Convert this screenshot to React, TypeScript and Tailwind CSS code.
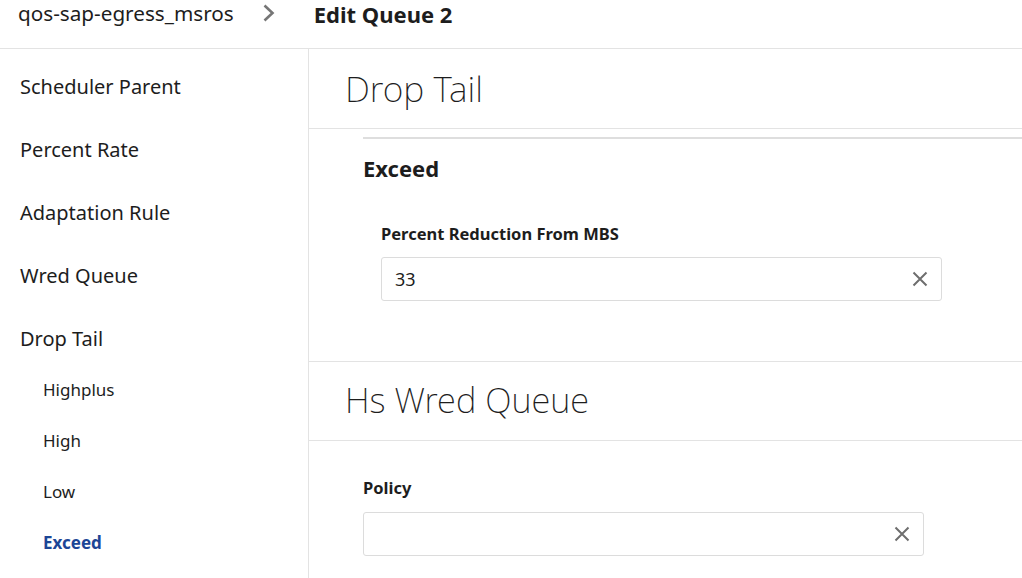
const navItems = ["Scheduler Parent", "Percent Rate", "Adaptation Rule", "Wred Queue", "Drop Tail"];
const subItems = ["Highplus", "High", "Low", "Exceed"];

function ClearIcon() {
  return (
    <svg width="16" height="16" viewBox="0 0 16 16" className="text-[#6e6e6e]">
      <path d="M1.5 1.5L14.5 14.5M14.5 1.5L1.5 14.5" stroke="currentColor" strokeWidth="2" fill="none" />
    </svg>
  );
}

function ClearInput({ value, className }: { value: string; className?: string }) {
  return (
    <div
      className={`flex h-[44px] w-[561px] items-center justify-between rounded-[3px] border border-[#dcdcdc] bg-white pl-[13px] pr-[13px] ${className ?? ""}`}
    >
      <span className="text-[18px] text-[#1d1d1d]">{value}</span>
      <ClearIcon />
    </div>
  );
}

export default function App() {
  return (
    <div className="h-[578px] w-[1022px] overflow-hidden bg-white font-['Noto_Sans',sans-serif] text-[#1d1d1d]">
      <header className="flex h-[49px] items-start border-b border-[#e3e3e3]">
        <span className="ml-[18px] text-[20.7px] leading-[26px]">qos-sap-egress_msros</span>
        <svg width="12" height="18" viewBox="0 0 12 18" className="ml-[29px] mt-[4px] text-[#767676]">
          <path d="M1.5 1.5L9.5 9L1.5 16.5" stroke="currentColor" strokeWidth="2.6" fill="none" />
        </svg>
        <span className="ml-[39px] text-[22px] font-bold leading-[28px]">Edit Queue 2</span>
      </header>

      <div className="flex h-[529px]">
        <nav className="w-[309px] shrink-0 border-r border-[#e3e3e3] pt-[6px]">
          {navItems.map((item) => (
            <div key={item} className="flex h-[63px] items-center pl-[20px] text-[20px]">
              {item}
            </div>
          ))}
          <div className="-mt-[6px]">
            {subItems.map((item) => (
              <div
                key={item}
                className={`flex h-[51px] items-center pl-[43px] text-[17px] ${
                  item === "Exceed" ? "font-bold text-[#1c4696]" : ""
                }`}
              >
                {item}
              </div>
            ))}
          </div>
        </nav>

        <main className="flex-1">
          <section className="flex h-[80px] items-center border-b border-[#e3e3e3] pl-[36px]">
            <h1 className="text-[35.5px] font-[250]">Drop Tail</h1>
          </section>

          <div className="ml-[54px] mt-[8px] border-t-2 border-[#dedede]">
            <h2 className="mt-[14px] text-[22px] font-bold leading-[30px]">Exceed</h2>
            <div className="pl-[18px] pt-[40px]">
              <label className="block text-[16.5px] font-bold leading-[22px]">Percent Reduction From MBS</label>
              <ClearInput value="33" className="mt-[12px]" />
            </div>
          </div>

          <div className="mt-[60px] border-t border-[#e3e3e3]">
            <section className="flex h-[79px] items-center border-b border-[#e3e3e3] pb-[3px] pl-[36px]">
              <h1 className="text-[34.5px] font-[250]">Hs Wred Queue</h1>
            </section>
            <div className="pl-[54px] pt-[36px]">
              <label className="block text-[16.5px] font-bold leading-[22px]">Policy</label>
              <ClearInput value="" className="mt-[13px]" />
            </div>
          </div>
        </main>
      </div>
    </div>
  );
}
